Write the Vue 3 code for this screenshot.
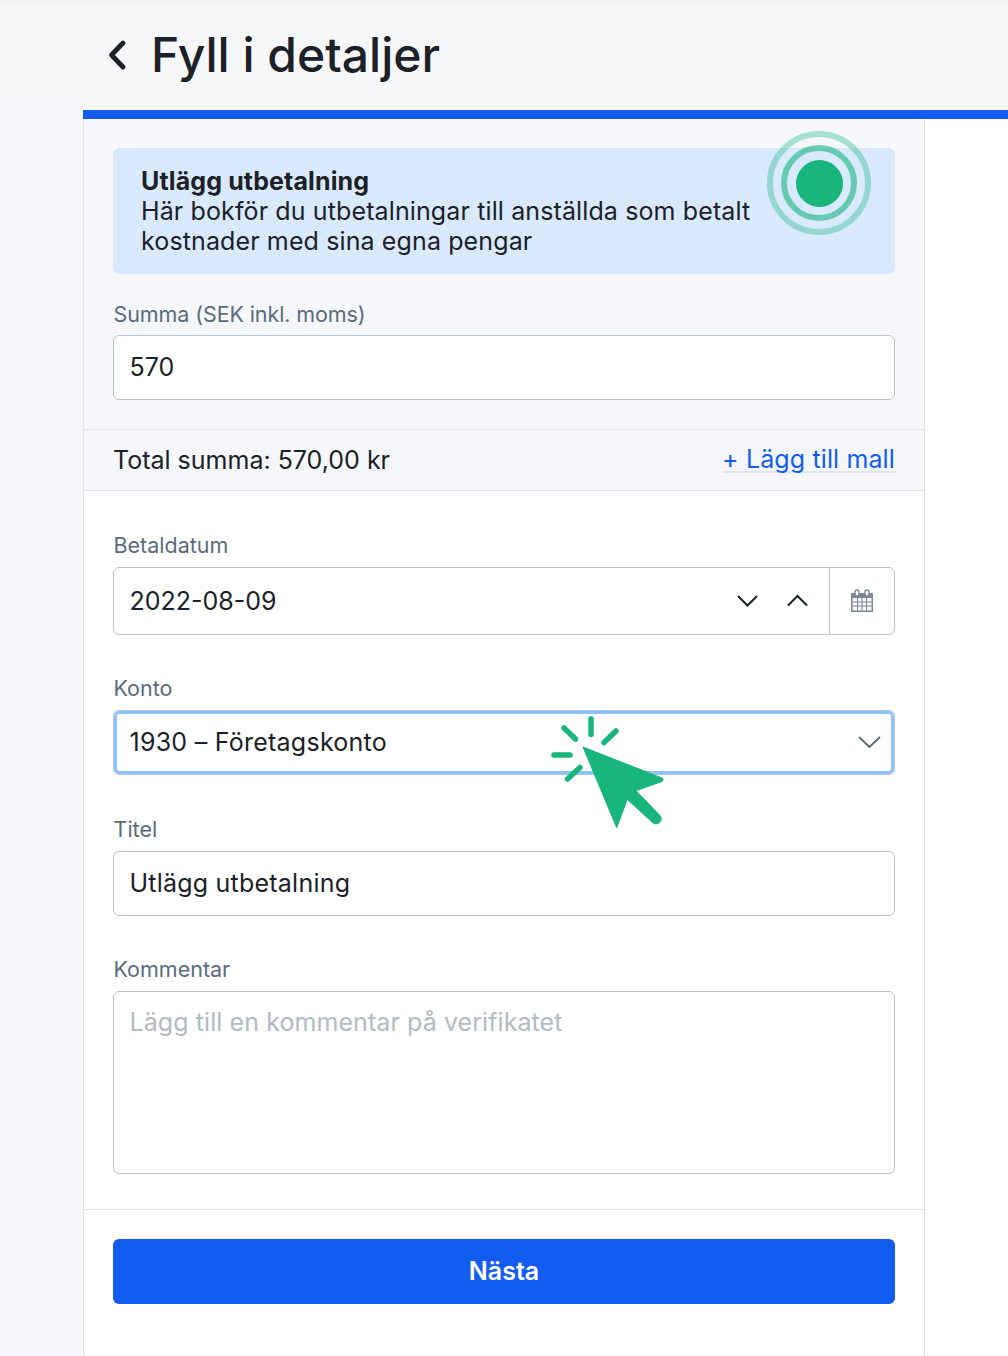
<script setup>
const dateArrows = ['M2 2l9.5 9.5L21 2', 'M2 11.5L11.5 2 21 11.5']
</script>

<template>
  <div class="page">
    <header class="top">
      <svg class="back" width="20" height="32" viewBox="0 0 20 32">
        <path d="M16 4L4.500 16 16 28" fill="none" stroke="#1c2127" stroke-width="4.800" stroke-linecap="round" stroke-linejoin="round" />
      </svg>
      <h1>Fyll i detaljer</h1>
    </header>
    <div class="bar"></div>
    <main class="panel">
      <section class="grey">
        <div class="notice">
          <strong>Utlägg utbetalning</strong>
          <p>Här bokför du utbetalningar till anställda som betalt kostnader med sina egna pengar</p>
          <span class="ping"><i class="ring-outer"></i><i class="ring-inner"></i><i class="dot"></i></span>
        </div>
        <label class="label first">Summa (SEK inkl. moms)</label>
        <div class="input">570</div>
      </section>

      <div class="total">
        <span>Total summa: 570,00 kr</span>
        <a class="add">+ Lägg till mall</a>
      </div>

      <section class="form">
        <div class="field">
          <label class="label">Betaldatum</label>
          <div class="input date">
            <span class="grow">2022-08-09</span>
            <svg v-for="d in dateArrows" :key="d" class="arrow" width="23" height="14" viewBox="0 0 23 14">
              <path :d="d" fill="none" stroke="#1c2127" stroke-width="2" />
            </svg>
            <span class="cal">
              <svg width="24" height="24" viewBox="0 0 24 24">
                <path d="M2 4h20a1 1 0 0 1 1 1v17a1 1 0 0 1-1 1H2a1 1 0 0 1-1-1V5a1 1 0 0 1 1-1z" fill="#7d8793" />
                <rect x="2.500" y="9" width="19" height="12.500" fill="#f4f5f7" />
                <path d="M7.500 9v12.500M12 9v12.500M16.500 9v12.500M2.500 13h19M2.500 17h19" stroke="#7d8793" stroke-width="1" />
                <rect x="5" y="1" width="4" height="6" rx="2" fill="#fff" stroke="#7d8793" stroke-width="1.400" />
                <rect x="15" y="1" width="4" height="6" rx="2" fill="#fff" stroke="#7d8793" stroke-width="1.400" />
              </svg>
            </span>
          </div>
        </div>

        <div class="field konto">
          <label class="label">Konto</label>
          <div class="input select">
            <span class="grow">1930 – Företagskonto</span>
            <svg width="23" height="14" viewBox="0 0 23 14">
              <path d="M1 2l10.500 10L22 2" fill="none" stroke="#5c6673" stroke-width="1.800" />
            </svg>
          </div>
          <svg class="cursor" width="120" height="120" viewBox="0 0 120 120">
            <path d="M33 32L112 63a2 2 0 0 1 0 3.500L86 75.700 109.500 100a5 5 0 0 1-7 7.500L77.300 84.300 66.700 112.700z" fill="#18b57c" stroke="#18b57c" stroke-width="1" stroke-linejoin="round" />
            <path d="M41 4v15.500M66 16L54 27.500M14 13l11.500 11M4 40h16M30 52.500L17.500 64" fill="none" stroke="#18b57c" stroke-width="5.500" stroke-linecap="round" />
          </svg>
        </div>

        <div class="field titel">
          <label class="label">Titel</label>
          <div class="input">Utlägg utbetalning</div>
        </div>

        <div class="field kommentar">
          <label class="label">Kommentar</label>
          <div class="input area">Lägg till en kommentar på verifikatet</div>
        </div>
      </section>

      <footer class="foot">
        <button class="next">Nästa</button>
      </footer>
    </main>
  </div>
</template>

<style>
html, body {
  margin: 0;
  background: #fff;
}
</style>

<style scoped>
.page {
  width: 1008px;
  height: 1356px;
  overflow: hidden;
  font-family: Inter, "Liberation Sans", sans-serif;
  color: #1c2127;
  background: linear-gradient(to right, #f5f7fa 83px, #fff 83px);
}

.top {
  height: 110px;
  box-sizing: border-box;
  padding-left: 107px;
  display: flex;
  align-items: center;
  gap: 24px;
  background: linear-gradient(to bottom, #f2f3f5, #f6f7f9 8px);
}

.back {
  flex: none;
}

h1 {
  margin: 0;
  font-weight: 500;
  font-size: 48px;
  line-height: 1;
}

.bar {
  height: 9px;
  margin-left: 83px;
  background: #125cf0;
}

.panel {
  width: 842px;
  box-sizing: border-box;
  margin-left: 83px;
  border-left: 1px solid #e1e4e8;
  border-right: 1px solid #e1e4e8;
  height: 1237px;
}

.grey {
  height: 310px;
  box-sizing: border-box;
  padding: 29px 29px 0;
  background: #f5f7fa;
}

.notice {
  position: relative;
  height: 126px;
  box-sizing: border-box;
  padding: 19px 28px;
  background: #d9e9fe;
  border-radius: 6px;
  font-size: 25px;
  line-height: 30px;
  letter-spacing: 0.12px;
}

.notice strong {
  display: block;
  font-weight: 700;
  line-height: 29px;
}

.notice p {
  margin: 0;
  width: 640px;
}

.ping {
  position: absolute;
  left: 654px;
  top: -17px;
  width: 104px;
  height: 104px;
}

.ping i {
  position: absolute;
  display: block;
  border-radius: 50%;
  box-sizing: border-box;
}

.ring-outer {
  inset: 0;
  border: 6px solid rgba(24, 181, 124, 0.35);
}

.ring-inner {
  inset: 14px;
  border: 6px solid rgba(24, 181, 124, 0.6);
}

.dot {
  inset: 28.500px;
  background: #18b57c;
}

.label {
  display: block;
  font-size: 21.500px;
  line-height: 28px;
  color: #5c6b7a;
  padding-left: 0.500px;
}

.first {
  margin-top: 26px;
  margin-bottom: 7px;
  letter-spacing: -0.100px;
}

.input {
  height: 65px;
  box-sizing: border-box;
  padding: 0 16px 1px 15.500px;
  display: flex;
  align-items: center;
  font-size: 25px;
  background: #fff;
  border: 1px solid #bdc3ca;
  border-radius: 6px;
}

.total {
  height: 62px;
  box-sizing: border-box;
  padding: 0 29px;
  display: flex;
  align-items: center;
  justify-content: space-between;
  font-size: 25px;
  background: #f5f7fa;
  border-top: 1px solid #e1e4e8;
  border-bottom: 1px solid #e1e4e8;
}

.add {
  color: #125cf0;
  padding-top: 2px;
  margin-bottom: 1px;
  line-height: 23px;
  letter-spacing: 0.130px;
  border-bottom: 2px solid #e1e4e8;
}

.form {
  padding: 40px 29px 0;
  height: 719px;
  box-sizing: border-box;
  border-bottom: 1px solid #e1e4e8;
}

.field {
  position: relative;
}

.field .label {
  margin-bottom: 8px;
}

.date {
  height: 68px;
  padding-right: 0;
  padding-bottom: 0;
}

.grow {
  flex: 1;
}

.arrow {
  margin-right: 20px;
}

.arrow + .arrow {
  margin-left: 7px;
}

.cal {
  width: 65px;
  height: 100%;
  box-sizing: border-box;
  flex: none;
  display: flex;
  align-items: center;
  justify-content: center;
  border-left: 1px solid #bdc3ca;
}

.konto {
  margin-top: 39px;
}

.select {
  padding-right: 13px;
  letter-spacing: 0.250px;
  box-shadow: inset 0 0 0 3px #8ac4fb;
}

.cursor {
  position: absolute;
  left: 437px;
  top: 41px;
}

.titel {
  margin-top: 40px;
}

.titel .input {
  letter-spacing: 0.220px;
}

.kommentar {
  margin-top: 39px;
}

.area {
  height: 183px;
  padding-top: 15px;
  align-items: flex-start;
  letter-spacing: 0.080px;
  color: #b3bac2;
}

.foot {
  padding: 29px 29px 0;
}

.next {
  display: block;
  width: 100%;
  height: 65px;
  padding: 0 0 2px;
  border: 0;
  border-radius: 6px;
  background: #125cf0;
  color: #fff;
  font-family: Inter, sans-serif;
  font-weight: 600;
  font-size: 25px;
}
</style>
